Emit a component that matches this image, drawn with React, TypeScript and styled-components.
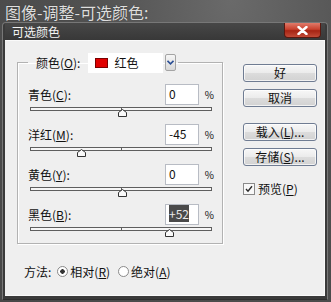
import React from 'react';
import styled, {createGlobalStyle} from 'styled-components';

const GlobalStyle = createGlobalStyle`
  html, body {
    margin: 0;
    padding: 0;
  }
  body {
    background: #4e4e4e;
    font-family: "Noto Sans CJK SC", "Noto Sans", sans-serif;
  }
`

const sliders = [
    {label: '青色', key: 'C', value: '0', num: 0},
    {label: '洋红', key: 'M', value: '-45', num: -45},
    {label: '黄色', key: 'Y', value: '0', num: 0},
    {label: '黑色', key: 'B', value: '+52', num: 52, selected: true},
]

const TRACK_W = 182

function Thumb() {
    return (
        <svg width="9" height="8" viewBox="0 0 9 8">
            <polygon points="4.5,0.5 8.5,3.5 8.5,7.5 0.5,7.5 0.5,3.5" fill="#fafafa" stroke="#333" strokeWidth="1"/>
        </svg>
    )
}

function App() {
    return (
        <StyledPage>
            <GlobalStyle/>
            <Heading>图像-调整-可选颜色:</Heading>
            <Dialog>
                <TitleBar>
                    <Title>可选颜色</Title>
                    <CloseButton>
                        <svg width="11" height="9" viewBox="0 0 11 9">
                            <path d="M1.5 1 L9.5 8 M9.5 1 L1.5 8" stroke="#fff" strokeWidth="2.4" strokeLinecap="round"/>
                        </svg>
                    </CloseButton>
                </TitleBar>
                <Body>
                    <LeftCol>
                        <GroupBox>
                            <Legend>
                                <span>颜色(<u>O</u>):</span>
                                <SelectBox>
                                    <SelectField>
                                        <Swatch/>
                                        <span>红色</span>
                                    </SelectField>
                                    <DropButton>
                                        <svg width="7" height="5" viewBox="0 0 7 5">
                                            <path d="M0.5 0.8 L3.5 3.8 L6.5 0.8" fill="none" stroke="#2c4f95" strokeWidth="1.6"/>
                                        </svg>
                                    </DropButton>
                                </SelectBox>
                            </Legend>
                            <SliderList>
                                {sliders.map(s => (
                                    <SliderRow key={s.key}>
                                        <SliderHeader>
                                            <Label>{s.label}(<u>{s.key}</u>):</Label>
                                            <ValueBox>
                                                <ValueText $selected={s.selected}>{s.value}</ValueText>
                                            </ValueBox>
                                            <Percent>%</Percent>
                                        </SliderHeader>
                                        <Track>
                                            <ThumbWrap style={{left: (s.num + 100) / 200 * TRACK_W - 4.5}}>
                                                <Thumb/>
                                            </ThumbWrap>
                                        </Track>
                                    </SliderRow>
                                ))}
                            </SliderList>
                        </GroupBox>
                        <MethodRow>
                            <span>方法:</span>
                            <RadioOption $gap={6}>
                                <Radio $checked/>
                                <span>相对(<u>R</u>)</span>
                            </RadioOption>
                            <RadioOption $gap={8}>
                                <Radio/>
                                <span>绝对(<u>A</u>)</span>
                            </RadioOption>
                        </MethodRow>
                    </LeftCol>
                    <RightCol>
                        <Button>好</Button>
                        <Button $top={7}>取消</Button>
                        <Button $top={16}>载入(<u>L</u>)...</Button>
                        <Button $top={7}>存储(<u>S</u>)...</Button>
                        <Preview>
                            <CheckBox>
                                <svg width="8" height="8" viewBox="0 0 8 8">
                                    <path d="M1 4 L3 6.2 L7 1.2" fill="none" stroke="#2a2a2a" strokeWidth="1.4"/>
                                </svg>
                            </CheckBox>
                            <span>预览(<u>P</u>)</span>
                        </Preview>
                    </RightCol>
                </Body>
            </Dialog>
        </StyledPage>
    );
}

export default App;

const StyledPage = styled.div`
  width: 331px;
  height: 302px;
  box-sizing: border-box;
  padding-top: 2px;
  overflow: hidden;
  background: radial-gradient(ellipse at 70% 0%, #6a6a6a 0%, #505050 45%, #474747 100%);
`

const Heading = styled.div`
  margin-left: 5px;
  height: 20px;
  line-height: 20px;
  font-size: 16px;
  color: #dedede;
  text-shadow: 0 0 1px rgba(0, 0, 0, 0.4);
`

const Dialog = styled.div`
  margin-left: 2px;
  width: 326px;
  height: 278px;
  box-sizing: border-box;
  padding: 0 2px 3px 2px;
  background: #3a3a3a;
  border: 1px solid #777;
  border-bottom-color: #2e2e2e;
  border-radius: 4px 4px 0 0;
  display: flex;
  flex-direction: column;
`

const TitleBar = styled.div`
  height: 17px;
  display: flex;
  justify-content: space-between;
  align-items: flex-start;
  background: linear-gradient(#474747, #383838);
`

const Title = styled.div`
  padding-left: 7px;
  line-height: 17px;
  font-size: 12px;
  color: #f4f4f4;
`

const CloseButton = styled.div`
  width: 37px;
  height: 15px;
  margin-right: 4px;
  box-sizing: border-box;
  border: 1px solid #5a1810;
  border-top: none;
  border-radius: 0 0 4px 4px;
  background: linear-gradient(#e07a6a 0%, #c8412e 45%, #a62414 55%, #c24a36 100%);
  display: flex;
  align-items: center;
  justify-content: center;
`

const Body = styled.div`
  flex: 1;
  display: flex;
  gap: 20px;
  padding-left: 12px;
  background: #efefef;
  border: 1px solid #fafafa;
  border-left-width: 0;
  font-size: 12px;
  color: #111;
`

const LeftCol = styled.div`
  width: 206px;
  display: flex;
  flex-direction: column;
`

const GroupBox = styled.fieldset`
  margin: 11px 0 0 0;
  padding: 11px 7px 12px 10px;
  box-sizing: border-box;
  width: 206px;
  border: 1px solid #b2b2b2;
  box-shadow: inset 1px 1px 0 #fff, 1px 1px 0 #fff;
  min-width: 0;
`

const Legend = styled.legend`
  display: flex;
  align-items: center;
  gap: 8px;
  height: 21px;
  padding: 0 2px 0 8px;
`

const SelectBox = styled.div`
  display: flex;
  align-items: center;
  gap: 2px;
`

const SelectField = styled.div`
  width: 75px;
  height: 20px;
  box-sizing: border-box;
  padding-left: 7px;
  display: flex;
  align-items: center;
  gap: 6px;
  background: #fff;
`

const Swatch = styled.div`
  width: 13px;
  height: 10px;
  box-sizing: border-box;
  background: #e00000;
  border: 1px solid #7a0000;
`

const DropButton = styled.div`
  width: 11px;
  height: 17px;
  box-sizing: border-box;
  border: 1px solid #a4a4a4;
  border-radius: 2px;
  background: linear-gradient(#f6f6f6, #d8d8d8);
  display: flex;
  align-items: center;
  justify-content: center;
`

const SliderList = styled.div`
  display: flex;
  flex-direction: column;
  gap: 13px;
`

const SliderRow = styled.div`
  display: flex;
  flex-direction: column;
  gap: 2px;
`

const SliderHeader = styled.div`
  display: flex;
  align-items: center;
  height: 21px;
`

const Label = styled.span`
  flex: 1;
`

const ValueBox = styled.div`
  width: 34px;
  height: 21px;
  box-sizing: border-box;
  padding: 1px 0 0 3px;
  background: #fff;
  border: 1px solid #b8bcc4;
  line-height: 15px;
`

const ValueText = styled.span<{ $selected?: boolean }>`
  background: ${p => p.$selected ? '#4a4a4a' : 'transparent'};
  color: ${p => p.$selected ? '#e8e8e8' : '#111'};
`

const Percent = styled.span`
  width: 16px;
  padding-right: 1px;
  box-sizing: border-box;
  text-align: right;
  font-size: 10px;
`

const Track = styled.div`
  position: relative;
  margin-left: 2px;
  width: ${TRACK_W}px;
  height: 4px;
  box-sizing: border-box;
  border: 1px solid #5e5e5e;
  background: #f6f6f6;

  &::after {
    content: "";
    position: absolute;
    left: 50%;
    top: 0;
    width: 1px;
    height: 100%;
    background: #5e5e5e;
  }
`

const ThumbWrap = styled.div`
  position: absolute;
  top: 1px;
  z-index: 1;
  line-height: 0;
`

const MethodRow = styled.div`
  margin-top: 19px;
  padding-left: 7px;
  display: flex;
  align-items: center;
  height: 16px;
`

const RadioOption = styled.div<{ $gap: number }>`
  display: flex;
  align-items: center;
  gap: 2px;
  margin-left: ${p => p.$gap}px;
`

const Radio = styled.div<{ $checked?: boolean }>`
  width: 11px;
  height: 11px;
  box-sizing: border-box;
  border-radius: 50%;
  border: 1px solid #8a8a8a;
  background: ${p => p.$checked
          ? 'radial-gradient(circle, #333 0 2px, #fff 2.5px)'
          : '#fff'};
`

const RightCol = styled.div`
  width: 74px;
  padding-top: 23px;
  display: flex;
  flex-direction: column;
`

const Button = styled.div<{ $top?: number }>`
  height: 18px;
  margin-top: ${p => p.$top || 0}px;
  box-sizing: border-box;
  border: 1px solid #6f7c92;
  border-radius: 3px;
  background: linear-gradient(#f7f7f7 0%, #ebebeb 50%, #dcdcdc 51%, #d2d2d2 100%);
  box-shadow: inset 0 0 0 1px rgba(255, 255, 255, 0.7);
  display: flex;
  align-items: center;
  justify-content: center;
  line-height: 1;
`

const Preview = styled.div`
  margin-top: 14px;
  display: flex;
  align-items: center;
  gap: 3px;
`

const CheckBox = styled.div`
  width: 12px;
  height: 12px;
  box-sizing: border-box;
  border: 1px solid #8a8a8a;
  background: #f8f8f8;
  display: flex;
  align-items: center;
  justify-content: center;
`
